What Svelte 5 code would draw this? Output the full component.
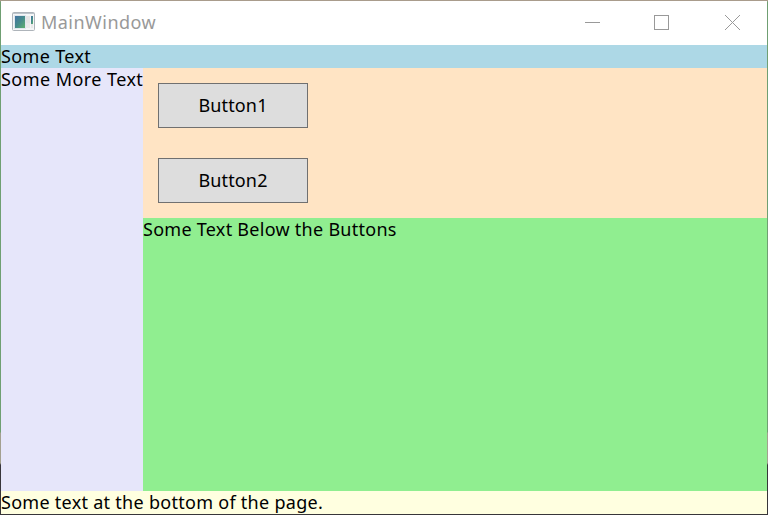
<script>
  const buttons = ['Button1', 'Button2'];
</script>

<div class="window">
  <header class="titlebar">
    <svg class="app-icon" width="24" height="20" viewBox="0 0 24 20" aria-hidden="true">
      <defs>
        <linearGradient id="pane" x1="0" y1="0" x2="1" y2="1">
          <stop offset="0" stop-color="#4371a5" />
          <stop offset="0.5" stop-color="#468b8b" />
          <stop offset="1" stop-color="#63b56b" />
        </linearGradient>
      </defs>
      <rect x="0.5" y="0.5" width="22" height="18" rx="1" fill="#f5f6f7" stroke="#aeb4ba" />
      <rect x="1" y="1" width="21" height="1" fill="#bcc4cb" />
      <rect x="2.5" y="3.5" width="11" height="13" fill="url(#pane)" stroke="#dfe7ed" />
      <rect x="14" y="4" width="4" height="7" fill="#e4e4e4" />
      <rect x="14" y="11" width="4" height="5" fill="#e9e9e9" />
      <rect x="19" y="4" width="2" height="8" fill="url(#pane)" />
      <rect x="19" y="12" width="2" height="4" fill="#e9e9e9" />
    </svg>
    <span class="title">MainWindow</span>
    <div class="controls">
      <svg width="70" height="44" viewBox="0 0 70 44" aria-label="Minimize">
        <path d="M28 21.5H43" />
      </svg>
      <svg width="70" height="44" viewBox="0 0 70 44" aria-label="Maximize">
        <rect x="27.5" y="14.5" width="14" height="14" />
      </svg>
      <svg width="70" height="44" viewBox="0 0 70 44" aria-label="Close">
        <path d="M28 14L43 29M43 14L28 29" />
      </svg>
    </div>
  </header>
  <div class="top"><span class="t1">Some Text</span></div>
  <div class="middle">
    <aside class="left"><span class="t2">Some More Text</span></aside>
    <main>
      <section class="buttons">
        {#each buttons as label}
          <button type="button">{label}</button>
        {/each}
      </section>
      <section class="below"><span class="t3">Some Text Below the Buttons</span></section>
    </main>
  </div>
  <footer><span class="t4">Some text at the bottom of the page.</span></footer>
</div>

<style>
  .window {
    box-sizing: border-box;
    width: 768px;
    height: 515px;
    border: 1px solid;
    border-image: linear-gradient(#a99c8c 0 1px, #6f9f72 2px 432px, #a3a08f 433px 463px, #38363a 465px) 1;
    display: flex;
    flex-direction: column;
    overflow: hidden;
    font: 18px/23px "Noto Sans", "Open Sans", sans-serif;
    color: #000;
    background: #fff;
  }
  span {
    white-space: nowrap;
  }
  .title {
    letter-spacing: 0.47px;
    padding-bottom: 2px;
  }
  .t1 {
    letter-spacing: 0.35px;
  }
  .t2 {
    letter-spacing: 0.44px;
  }
  .t3 {
    letter-spacing: 0.27px;
  }
  .t4 {
    letter-spacing: 0.28px;
  }
  .titlebar {
    height: 44px;
    flex: none;
    display: flex;
    align-items: center;
    color: #999;
  }
  .app-icon {
    margin: 0 5px 2px 11px;
  }
  .controls {
    margin-left: auto;
    display: flex;
  }
  .controls svg {
    fill: none;
    stroke: #999;
    stroke-width: 1;
  }
  .top {
    height: 23px;
    flex: none;
    background: #add8e6;
  }
  .middle {
    flex: 1;
    min-height: 0;
    display: flex;
  }
  .left {
    width: 142px;
    flex: none;
    background: #e6e6fa;
  }
  main {
    flex: 1;
    display: flex;
    flex-direction: column;
  }
  .buttons {
    box-sizing: border-box;
    height: 150px;
    padding: 15px;
    display: flex;
    flex-direction: column;
    gap: 30px;
    background: #ffe4c4;
  }
  button {
    box-sizing: border-box;
    width: 150px;
    height: 45px;
    padding: 0;
    border: 1px solid #707070;
    border-radius: 0;
    background: #ddd;
    color: #000;
    font: inherit;
    letter-spacing: 0.15px;
  }
  .below {
    flex: 1;
    background: #90ee90;
  }
  footer {
    height: 23px;
    flex: none;
    background: #ffffe0;
  }
</style>
